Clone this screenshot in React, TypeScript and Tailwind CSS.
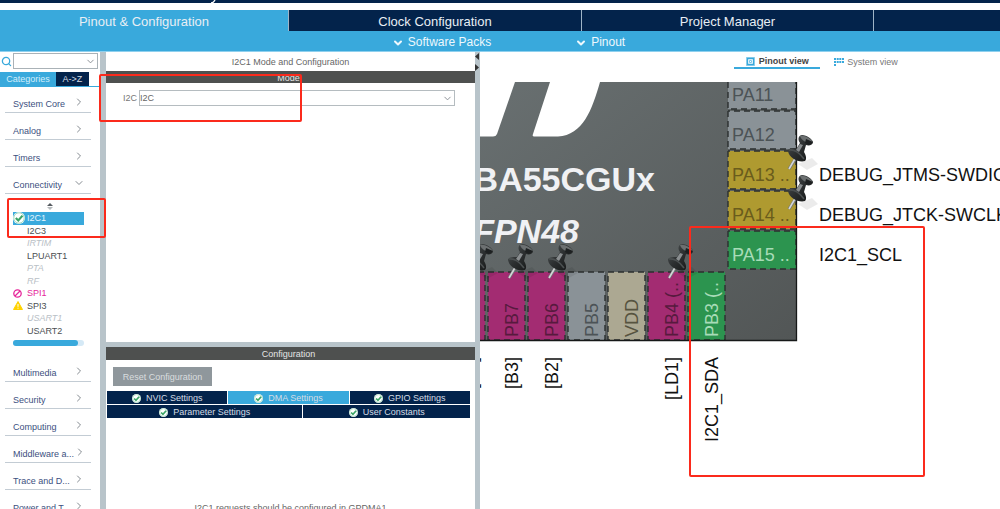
import React from "react";
import { ChevronDown, ChevronRight, Search } from "lucide-react";

type Status = "ok" | "blocked" | "warning";
type Peripheral = { name: string; status?: Status; disabled?: boolean };

const peripherals: Peripheral[] = [
  { name: "I2C1", status: "ok" },
  { name: "I2C3" },
  { name: "IRTIM", disabled: true },
  { name: "LPUART1" },
  { name: "PTA", disabled: true },
  { name: "RF", disabled: true },
  { name: "SPI1", status: "blocked" },
  { name: "SPI3", status: "warning" },
  { name: "USART1", disabled: true },
  { name: "USART2" },
];

function CheckBadge({ size }: { size: number }) {
  return (
    <svg width={size} height={size} viewBox="0 0 12 12" className="shrink-0">
      <circle cx="6" cy="6" r="6" fill="#fff" />
      <circle cx="6" cy="6" r="5.2" fill="none" stroke="#8fd3ac" strokeWidth="0.8" />
      <path d="M2.8 6 5.3 8.5 9.5 3.6" fill="none" stroke="#3aa566" strokeWidth="2.2" />
    </svg>
  );
}

function StatusIcon({ status }: { status?: Status }) {
  if (status === "ok") return <CheckBadge size={12} />;
  if (status === "blocked")
    return (
      <svg width="9" height="9" viewBox="0 0 9 9">
        <circle cx="4.5" cy="4.5" r="3.7" fill="none" stroke="#e6269a" strokeWidth="1.3" />
        <path d="M2 7 7 2" stroke="#e6269a" strokeWidth="1.3" />
      </svg>
    );
  if (status === "warning")
    return (
      <svg width="10" height="9" viewBox="0 0 10 9">
        <path d="M5 .5 9.5 8.5H.5Z" fill="#ffd200" stroke="#ffd200" strokeLinejoin="round" />
        <path d="M5 3v2.8M5 6.7v1" stroke="#fff" />
      </svg>
    );
  return null;
}

function Category({ name, open = false }: { name: string; open?: boolean }) {
  const Icon = open ? ChevronDown : ChevronRight;
  return (
    <button className="ml-[5px] flex h-[27px] w-[86px] shrink-0 items-end justify-between border-b border-[#c3ccd4] pr-[6px] pb-[2px] pl-2 text-left leading-[11px] text-[#3c4f80]">
      <span className="whitespace-nowrap">{name}</span>
      <Icon size={12} strokeWidth={2} className="mb-[2px] shrink-0 text-[#858b91]" />
    </button>
  );
}

function Sidebar() {
  return (
    <aside className="flex w-[100px] shrink-0 flex-col overflow-hidden">
      <label className="flex h-[17px] items-center gap-px pt-px pl-px">
        <Search size={11} strokeWidth={2.8} className="text-[#39a9dc]" />
        <span className="relative block h-4 w-[85px]">
          <select aria-label="Search" className="h-4 w-full appearance-none border border-[#aab2b7] bg-white">
            <option></option>
          </select>
          <ChevronDown size={11} strokeWidth={2} className="pointer-events-none absolute top-[3px] right-[2px] text-[#858b91]" />
        </span>
      </label>
      <div className="mt-[3px] flex h-[15px] shrink-0 border-b border-[#39a9dc]">
        <button className="w-14 bg-[#39a9dc] pt-px text-[#d3eefb]">Categories</button>
        <button className="w-[33px] bg-[#03234b] pt-px text-[#d5dce5]">A-&gt;Z</button>
      </div>
      <nav className="-mt-px flex flex-col">
        <Category name="System Core" />
        <Category name="Analog" />
        <Category name="Timers" />
        <Category name="Connectivity" open />
        <div className="mt-[7px] flex h-[11px] justify-center pt-[2px]">
          <svg width="6" height="7" viewBox="0 0 6 7">
            <path d="M3 0 6 3H0Z" fill="#555b60" />
            <path d="M0 4h6L3 7Z" fill="#b5babd" />
          </svg>
        </div>
        <ul className="ml-[13px] grid h-[125px] w-[71px] grid-rows-10">
          {peripherals.map((p) => (
            <li key={p.name} className="min-h-0">
              <button
                className={`flex h-full w-full items-center leading-[12px] ${
                  p.status === "ok"
                    ? "bg-[#39a9dc] text-[#e4f4fc]"
                    : p.status === "blocked"
                      ? "text-[#e6269a]"
                      : p.disabled
                        ? "text-[#b9c0c6] italic"
                        : "text-[#4b4f52]"
                }`}
              >
                <span className="flex w-[14px] shrink-0 items-center">
                  <StatusIcon status={p.status} />
                </span>
                {p.name}
              </button>
            </li>
          ))}
        </ul>
        <div className="mt-[3px] mb-[9px] ml-[13px] h-[6px] w-[71px] rounded-sm bg-[#d5e9f6]">
          <div className="h-full w-[65px] rounded-full bg-[#39a9dc]" />
        </div>
        <Category name="Multimedia" />
        <Category name="Security" />
        <Category name="Computing" />
        <Category name="Middleware a..." />
        <Category name="Trace and D..." />
        <Category name="Power and T..." />
      </nav>
    </aside>
  );
}

function SettingsTab({ name, active = false }: { name: string; active?: boolean }) {
  return (
    <button
      className={`flex h-[13px] items-center justify-center gap-[5px] pt-px text-[#d5dce5] ${
        active ? "bg-[#39a9dc]" : "bg-[#03234b]"
      }`}
    >
      <CheckBadge size={9} />
      {name}
    </button>
  );
}

function ConfigPane() {
  return (
    <section className="flex w-[369px] shrink-0 flex-col overflow-hidden">
      <div className="flex h-[290px] shrink-0 flex-col">
        <h1 className="flex h-[19px] items-center justify-center pt-[2px] text-[#666]">I2C1 Mode and Configuration</h1>
        <h2 className="flex h-3 items-center justify-center bg-[#4e504f] pt-[2px] pr-1 text-[#e4e4e4]">Mode</h2>
        <label className="mt-[7px] flex h-4 items-center gap-[2px] pr-5 pl-[17px] text-[#777]">
          I2C
          <span className="relative block h-4 flex-1">
            <select className="h-4 w-full appearance-none border border-[#b5bcc0] bg-white leading-[14px] text-[#666]">
              <option>I2C</option>
            </select>
            <ChevronDown size={11} strokeWidth={2} className="pointer-events-none absolute top-[3px] right-[2px] text-[#858b91]" />
          </span>
        </label>
      </div>
      <div className="h-[5px] shrink-0 bg-[#b8c4ca]" />
      <div className="flex flex-col">
        <h2 className="flex h-[13px] items-center justify-center bg-[#4e504f] pt-px pr-1 text-[#e4e4e4]">Configuration</h2>
        <button className="mt-[7px] ml-[7px] h-[19px] w-[99px] bg-[#8f979c] pt-px text-[#d9dddf]">Reset Configuration</button>
        <div className="mt-[5px] mr-[5px] ml-px flex flex-col gap-px">
          <div className="grid grid-cols-3 gap-px">
            <SettingsTab name="NVIC Settings" />
            <SettingsTab name="DMA Settings" active />
            <SettingsTab name="GPIO Settings" />
          </div>
          <div className="grid grid-cols-[196fr_167fr] gap-px">
            <SettingsTab name="Parameter Settings" />
            <SettingsTab name="User Constants" />
          </div>
        </div>
        <p className="mt-[84px] text-center leading-[12px] whitespace-nowrap text-[#666]">
          I2C1 requests should be configured in GPDMA1
        </p>
      </div>
    </section>
  );
}

function Pushpin({ x, y }: { x: number; y: number }) {
  return (
    <g transform={`translate(${x} ${y})`}>
      <path d="M11 29 20 35 31 29 25 23Z" fill="#000" opacity="0.08" />
      <path d="M9 23 2 34" stroke="#6f7476" strokeWidth="3" />
      <path d="M9 22 2 34" stroke="#d4d6d7" strokeWidth="1.6" />
      <path
        d="M1 16C1 13 6 13 10 13L13 8C10 4 12 0 15 0C20 0 25 4 26 7C26 10 22 11 19 10L17 17C19 20 20 24 18 26C12 28 2 23 1 16Z"
        fill="url(#pin)"
      />
      <path d="M13 1C18 0 24 4 26 7C22 9 15 7 13 1Z" fill="#6c7071" />
      <path d="M19 4 26 7 22 10 18 8Z" fill="#1d2021" />
      <path d="M13 9 9 15 12 17 16 10Z" fill="#8a8e90" />
      <path d="M2 15C7 14 13 18 17 24" fill="none" stroke="#4b5051" strokeWidth="1.6" />
    </g>
  );
}

const sidePins = [
  { name: "PA11", fill: "#8a9297", text: "#4c5356" },
  { name: "PA12", fill: "#8a9297", text: "#4c5356" },
  { name: "PA13 ..", fill: "#af9a30", text: "#6a5c1c" },
  { name: "PA14 ..", fill: "#af9a30", text: "#6a5c1c" },
  { name: "PA15 ..", fill: "#2c944f", text: "#a8dcb8" },
];

const bottomPins = [
  { name: "", x: -33, fill: "#a32c72", text: "#571a3e" },
  { name: "PB7", x: 7, fill: "#a32c72", text: "#571a3e" },
  { name: "PB6", x: 47, fill: "#a32c72", text: "#571a3e" },
  { name: "PB5", x: 87, fill: "#8a9297", text: "#4c5356" },
  { name: "VDD", x: 127, fill: "#aca892", text: "#56533f" },
  { name: "PB4 (..", x: 167, fill: "#a32c72", text: "#571a3e" },
  { name: "PB3 (..", x: 207, fill: "#2c944f", text: "#a8dcb8" },
];

const bottomLabels = [
  { name: "[B1]", x: -2 },
  { name: "[B3]", x: 39 },
  { name: "[B2]", x: 79 },
  { name: "[LD1]", x: 199 },
  { name: "I2C1_SDA", x: 239 },
];

function ChipView() {
  return (
    <svg width="520" height="428" viewBox="0 0 520 428" className="block shrink-0 text-[18px]" role="img" aria-label="Pinout">
      <defs>
        <linearGradient id="body" x1="0" y1="0" x2="1" y2="1">
          <stop offset="0" stopColor="#697071" />
          <stop offset="1" stopColor="#525656" />
        </linearGradient>
        <linearGradient id="pin" x1="0" y1="0" x2="1" y2="1">
          <stop offset="0" stopColor="#505556" />
          <stop offset="0.5" stopColor="#2b2e2f" />
          <stop offset="1" stopColor="#121414" />
        </linearGradient>
      </defs>
      <rect x="-2" y="0" width="319" height="259" fill="url(#body)" />
      <path d="M0 0H35L17 52Q16 54.500 13 54.500H0Z" fill="#fff" />
      <path d="M70 0H120C112 28 103 53 78 54.500H54Q52 54.500 53 52Z" fill="#fff" />
      <text x="175" y="109" textAnchor="end" fill="#f0f1f4" className="text-[34px] font-bold">STM32WBA55CGUx</text>
      <text x="99" y="161" textAnchor="end" fill="#f0f1f4" className="text-[34px] font-bold italic">UFQFPN48</text>
      {sidePins.map((p, i) => {
        const top = i === 0 ? 0 : 29 + (i - 1) * 40;
        const height = i === 0 ? 27 : 38;
        return (
          <g key={p.name}>
            <rect x="248" y={top} width="68" height={height} fill={p.fill} />
            <path
              d={`M248 ${top}V${top + height}H316V${top}${i === 0 ? "" : "H248"}`}
              fill="none"
              stroke="#2b2f2f"
              strokeWidth="1.4"
              strokeDasharray="6 4"
            />
            <text x="252" y={19 + i * 40} fill={p.text}>{p.name}</text>
          </g>
        );
      })}
      {bottomPins.map((p) => (
        <g key={p.x}>
          <rect x={p.x + 1} y="190" width="37" height="68" fill={p.fill} stroke="#2b2f2f" strokeWidth="1.4" strokeDasharray="6 4" />
          <text transform={`translate(${p.x + 31} 255) rotate(-90)`} fill={p.text}>{p.name}</text>
        </g>
      ))}
      <path d="M316.500 0V258.500H0" fill="none" stroke="#161818" strokeWidth="1.300" />
      {bottomLabels.map((l) => (
        <text key={l.name} transform={`translate(${l.x - 1} 275) rotate(-90)`} textAnchor="end" fill="#111">
          {l.name}
        </text>
      ))}
      <g fill="#111">
        <text x="339" y="99">DEBUG_JTMS-SWDIO</text>
        <text x="339" y="139">DEBUG_JTCK-SWCLK</text>
        <text x="339" y="179">I2C1_SCL</text>
      </g>
      <Pushpin x={307} y={53} />
      <Pushpin x={307} y={93} />
      <Pushpin x={-13} y={162} />
      <Pushpin x={27} y={162} />
      <Pushpin x={67} y={162} />
      <Pushpin x={187} y={162} />
    </svg>
  );
}

function PinoutPane() {
  return (
    <main className="flex min-w-0 flex-1 flex-col overflow-hidden">
      <div className="flex h-[17px] shrink-0 justify-center gap-[14px] pl-[152px]">
        <button className="flex w-[86px] items-center justify-center gap-1 border-b-2 border-[#39a9dc] pt-1 font-bold text-[#444]">
          <svg width="9" height="9" viewBox="0 0 9 9">
            <path d="M.5 .5h8v8H.5Z" fill="none" stroke="#39a9dc" strokeWidth="1" strokeDasharray="1 1" />
            <path d="M1.500 1.500h6v6H1.500Z" fill="none" stroke="#39a9dc" strokeWidth="1.300" />
            <path d="M3.500 3.500h2v2H3.500Z" fill="none" stroke="#7cc6e8" />
          </svg>
          Pinout view
        </button>
        <button className="flex items-center gap-[3px] pt-[3px] text-[#777]">
          <svg width="10" height="9" viewBox="0 0 10 9" fill="#39a9dc">
            <path d="M0 0h2v2H0ZM2.700 0h2v2h-2ZM5.300 0h2v2h-2ZM8 0h2v2H8ZM0 3h2v2H0ZM2.700 3h2v2h-2ZM5.300 3h2v2h-2ZM8 3h2v2H8ZM0 6h2v2H0Z" />
          </svg>
          System view
        </button>
      </div>
      <div className="flex overflow-hidden pt-[13px]">
        <ChipView />
      </div>
    </main>
  );
}

export default function App() {
  return (
    <div className="relative flex h-screen flex-col overflow-hidden bg-white font-['Liberation_Sans',Arial,sans-serif] text-[9px] leading-[11px]">
      <div className="h-[3px] shrink-0 bg-[#03234b]">
        <svg width="216" height="3" viewBox="0 0 216 3">
          <path d="M215 0C214 2 213 3 211 3" fill="none" stroke="#fff" strokeWidth="1.300" />
        </svg>
      </div>
      <div className="mt-[7px] grid h-[21px] shrink-0 grid-cols-[289fr_293fr_292fr_126fr] text-[13px] leading-[21px] text-[#e8eef4]">
        <button className="border-r border-[#9fb4c6] bg-[#39a9dc] pt-px">Pinout &amp; Configuration</button>
        <button className="border-r border-[#9fb4c6] bg-[#03234b] pt-px">Clock Configuration</button>
        <button className="border-r border-[#9fb4c6] bg-[#03234b] pt-px">Project Manager</button>
        <div className="bg-[#03234b]" />
      </div>
      <div className="flex h-[21px] shrink-0 items-center justify-center gap-[84px] border-b border-[#8fd0ee] bg-[#39a9dc] pt-[3px] pl-[17px] text-[12px] text-[#eef8fd]">
        <button className="flex items-center gap-1">
          <ChevronDown size={12} strokeWidth={4} />
          Software Packs
        </button>
        <button className="flex items-center gap-1">
          <ChevronDown size={12} strokeWidth={4} />
          Pinout
        </button>
      </div>
      <div className="flex min-h-0 flex-1">
        <Sidebar />
        <div className="w-[6px] shrink-0 bg-[#b8c4ca]" />
        <ConfigPane />
        <div className="w-[5px] shrink-0 bg-[#b8c4ca]">
          <svg width="5" height="22" viewBox="0 0 5 22" fill="#333">
            <path d="M4 1V8L0 4.500ZM0 12V19L4 15.500Z" />
          </svg>
        </div>
        <PinoutPane />
      </div>
      <div className="pointer-events-none absolute top-[74px] left-[99px] h-12 w-[203px] rounded-[2px] border-2 border-[#fb2a1c]" />
      <div className="pointer-events-none absolute top-[198px] left-[7px] h-[40px] w-[99px] rounded-[2px] border-2 border-[#fb2a1c]" />
      <div className="pointer-events-none absolute top-[226px] left-[689px] h-[251px] w-[236px] rounded-[2px] border-2 border-[#fb2a1c]" />
    </div>
  );
}
